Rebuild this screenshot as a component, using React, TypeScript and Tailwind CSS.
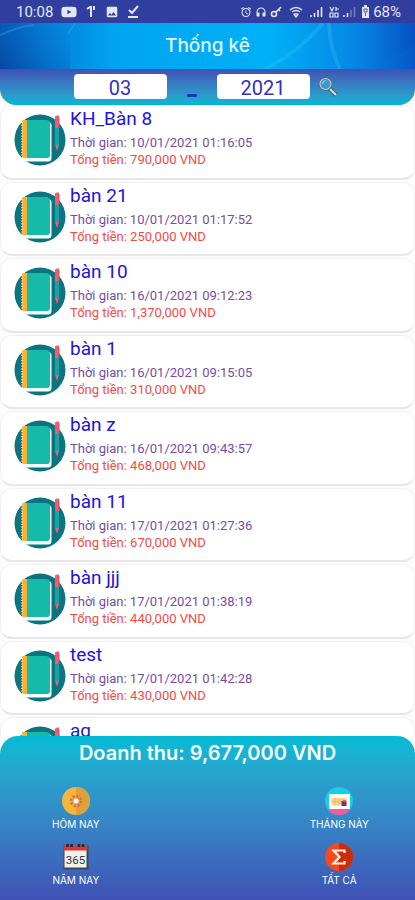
import type { ReactNode } from "react";
import { FaYoutube } from "react-icons/fa";
import { MdAlarm, MdHeadphones, MdImage } from "react-icons/md";

type Bill = { name: string; time: string; total: string };

const bills: Bill[] = [
  { name: "KH_Bàn 8", time: "10/01/2021 01:16:05", total: "790,000" },
  { name: "bàn 21", time: "10/01/2021 01:17:52", total: "250,000" },
  { name: "bàn 10", time: "16/01/2021 09:12:23", total: "1,370,000" },
  { name: "bàn 1", time: "16/01/2021 09:15:05", total: "310,000" },
  { name: "bàn z", time: "16/01/2021 09:43:57", total: "468,000" },
  { name: "bàn 11", time: "17/01/2021 01:27:36", total: "670,000" },
  { name: "bàn jjj", time: "17/01/2021 01:38:19", total: "440,000" },
  { name: "test", time: "17/01/2021 01:42:28", total: "430,000" },
  { name: "aq", time: "", total: "" },
];

function NotebookIcon() {
  return (
    <svg viewBox="0 0 52 52" className="size-[52px] shrink-0" aria-hidden="true">
      <circle cx="26" cy="26" r="25.5" fill="#0b7480" />
      <path d="M9 8h25q3.500 0 3.500 3.500V44q0 3.500-3.500 3.500H12q-4 0-4-3.500z" fill="#f4fffd" />
      <path d="M11 6h21q4 0 4 4v31q0 3-3 3H11z" fill="#16baa9" />
      <path d="M8 7q0-1 2-1h3v38H8z" fill="#fbb034" />
      <path d="M8 8v36" stroke="#ffe9b8" strokeWidth="1.500" strokeDasharray="1.200 1.500" />
      <path d="M41 14h4v17h-4z" fill="#16a5a3" />
      <path d="M41 3q0-1.500 2-1.500h2V14H41z" fill="#f25f6b" />
      <path d="M44 3h1.500v11H44z" fill="#d9536a" />
      <path d="M41 31h4l-2 6z" fill="#ec626c" />
    </svg>
  );
}

function SearchIcon() {
  return (
    <svg viewBox="0 0 20 20" className="size-5" aria-hidden="true">
      <path d="m11.500 11.500 6.500 6.500" stroke="#31566a" strokeWidth="4" />
      <path d="m12 12 6 6" stroke="#d4d9dd" strokeWidth="2.400" />
      <circle cx="7.500" cy="7" r="5.800" fill="#3c99cc" stroke="#426779" strokeWidth="2" />
      <circle cx="7.500" cy="7" r="5.500" fill="none" stroke="#c9d3d7" strokeWidth="1.200" />
      <path d="M4.500 7q0-3 3-3.500" fill="none" stroke="#a8d8ef" />
    </svg>
  );
}

function TodayIcon() {
  return (
    <svg viewBox="0 0 28 28" className="size-7" aria-hidden="true">
      <circle cx="14" cy="14" r="14" fill="#f4b63f" />
      <path d="M14 0a14 14 0 0 1 0 28z" fill="#dda23c" />
      <circle cx="14" cy="14" r="5" fill="none" stroke="#e76a37" strokeWidth="2.500" strokeDasharray="2.200 1.700" />
      <circle cx="14" cy="14" r="3.500" fill="#e98c52" />
      <circle cx="14" cy="14" r="2.500" fill="#fff" />
    </svg>
  );
}

function MonthIcon() {
  return (
    <svg viewBox="0 0 28 28" className="size-7" aria-hidden="true">
      <circle cx="14" cy="14" r="14" fill="#16cee5" />
      <path d="M2.500 22h23a14 14 0 0 1-23 0z" fill="#f35b9c" />
      <path d="M4 7h21v15H4z" fill="#fff" />
      <path d="M6.500 11h15v7.500h-15z" fill="#fbd58a" />
      <path d="M6.500 14.500h10M10 11v7M14 11v7M18 11v3" stroke="#f0b875" />
      <path d="M16.500 14h5v5h-5z" fill="#74317e" />
      <path d="M18 13h3v2h-3z" fill="#f0536d" />
    </svg>
  );
}

function YearIcon() {
  return (
    <svg viewBox="0 0 28 28" className="size-7" aria-hidden="true">
      <path d="M1.500 2h25v24.500h-25z" fill="#3d4654" />
      <path d="M2.500 7h22v17.500h-22z" fill="#f1f1ed" />
      <path d="M1.500 2h24v5.500h-24z" fill="#db3630" />
      <path d="M5.500 1v3M9.500 1v3M17 1v3M21 1v3" stroke="#26262b" strokeWidth="2.500" />
      <text x="13.500" y="20.500" textAnchor="middle" fontSize="11.500" fontWeight="400" fontFamily="Roboto, sans-serif" fill="#33373c">
        365
      </text>
    </svg>
  );
}

function SumIcon() {
  return (
    <svg viewBox="0 0 28 28" className="size-7" aria-hidden="true">
      <circle cx="14" cy="14" r="14" fill="#f44a1d" />
      <path d="M14 0a14 14 0 0 1 0 28z" fill="#cb2d0b" />
      <path d="M19.500 10V7.500H8.500l6 6.500-6 6.500h11V18" fill="none" stroke="#fff0e8" strokeWidth="2.200" />
    </svg>
  );
}

function StatusBar() {
  return (
    <div className="flex h-[23px] items-center bg-[#303f9f] pr-3.5 pl-4 text-[#e4e6f6]">
      <span className="w-[45px] text-[15px]/6">10:08</span>
      <div className="flex items-center gap-2">
        <FaYoutube className="size-4" />
        <svg viewBox="0 0 12 14" className="h-3.5 w-3" aria-hidden="true">
          <path d="M2 4l3-2h2M6 2v10M9 1v4" fill="none" stroke="currentColor" strokeWidth="2" />
        </svg>
        <MdImage className="size-3.5" />
        <svg viewBox="0 0 12 14" className="h-3.5 w-3" aria-hidden="true">
          <path d="m2 5 3 3 6-7M1 12h10" fill="none" stroke="currentColor" strokeWidth="2" />
        </svg>
      </div>
      <div className="ml-auto flex items-center gap-[3px]">
        <MdAlarm className="size-3" />
        <MdHeadphones className="size-3" />
        <svg viewBox="0 0 12 12" className="size-3" aria-hidden="true">
          <circle cx="4" cy="8" r="2.500" fill="none" stroke="currentColor" strokeWidth="1.600" />
          <path d="m6 6 5-5M8 3l2 2" stroke="currentColor" strokeWidth="1.600" />
        </svg>
        <svg viewBox="0 0 14 12" className="ml-1 h-3 w-3.5" aria-hidden="true">
          <path d="M1 4q6-5 12 0M3 6q4-3 8 0M5 8.500q2-1.500 4 0L7 11z" fill="none" stroke="currentColor" strokeWidth="1.400" />
        </svg>
        <svg viewBox="0 0 13 12" className="ml-1 h-3 w-[13px]" aria-hidden="true">
          <path d="M1 9v2M4.500 7v4M8 4v7M11.500 1v10" stroke="currentColor" strokeWidth="1.600" />
        </svg>
        <svg viewBox="0 0 12 12" className="ml-0.5 size-3" aria-hidden="true">
          <path d="M2 1l2 4 2-4M8 1v4M8 3h3M2 7h3v4H2zM7 7h3v4H7z" fill="none" stroke="currentColor" strokeWidth="1.200" />
        </svg>
        <svg viewBox="0 0 13 12" className="h-3 w-[13px]" aria-hidden="true">
          <path d="M1 9v2M4.500 7v4" stroke="currentColor" strokeWidth="1.600" />
          <path d="M8 4v7M11.500 1v10" stroke="currentColor" strokeWidth="1.400" opacity=".4" />
        </svg>
        <svg viewBox="0 0 9 13" className="ml-0.5 h-[13px] w-[9px]" aria-hidden="true">
          <path d="M1 2h2V0h3v2h2v11H1z" fill="currentColor" />
          <path d="M3 4h3v3H3zM4.500 8v3" fill="none" stroke="#4b58ab" />
        </svg>
        <span className="text-[15px]/6">68%</span>
      </div>
    </div>
  );
}

function TitleBar() {
  return (
    <header className="relative flex h-[46px] items-center justify-center overflow-hidden bg-[#00aef5]">
      <svg viewBox="0 0 415 46" preserveAspectRatio="none" className="absolute inset-0 size-full" aria-hidden="true">
        <defs>
          <linearGradient id="sky" x1="0" x2="1" y1="0" y2="0">
            <stop offset="0" stopColor="#0558b8" />
            <stop offset=".1" stopColor="#057bd4" />
            <stop offset=".28" stopColor="#00a5f0" />
            <stop offset=".65" stopColor="#00b0f6" />
            <stop offset=".87" stopColor="#0783e3" />
            <stop offset="1" stopColor="#0551c4" />
          </linearGradient>
          <linearGradient id="shade" x1="0" x2="1" y1="1" y2="0">
            <stop offset="0" stopColor="#053f94" stopOpacity=".6" />
            <stop offset="1" stopColor="#0579d4" stopOpacity="0" />
          </linearGradient>
        </defs>
        <path d="M0 0h415v46H0z" fill="url(#sky)" />
        <path d="M0 0h70v46H0z" fill="url(#shade)" />
        <path d="M329 0q1 26 11 46h75V23q-41 21-72 23-13-20-9-46z" fill="#0876dc" opacity=".2" />
        <path d="M264 46q34-16 59-46M329 0q1 26 11 46" fill="none" stroke="#35bff5" strokeWidth="4" opacity=".35" />
        <path d="M68 11l7-11M0 12q17-8 34-10" fill="none" stroke="#35bff5" strokeWidth="2" opacity=".3" />
      </svg>
      <h1 className="relative font-[Inter,sans-serif] text-[19px]/6 font-medium text-[#dff4ff]">Thống kê</h1>
    </header>
  );
}

function FilterBar() {
  const box = "h-[25px] w-[93px] rounded-sm bg-white pt-0.5 text-center text-xl/6 text-[#3930b4] outline-none";
  return (
    <form className="flex h-9 items-start justify-center rounded-b-2xl bg-linear-to-b from-[#3f51b5] to-[#00b6d2] pt-[5px] pr-1">
      <input aria-label="Tháng" defaultValue="03" className={box} />
      <span className="mx-5 mt-5 h-[3px] w-[10px] rounded-full bg-[#2630ba]" aria-hidden="true" />
      <input aria-label="Năm" defaultValue="2021" className={box} />
      <button type="button" aria-label="Tìm kiếm" className="ml-2 pt-[3px]">
        <SearchIcon />
      </button>
    </form>
  );
}

function BillCard({ bill }: { bill: Bill }) {
  return (
    <li className="mb-0.5 flex gap-1 overflow-hidden rounded-xl border border-b-2 border-[#f2f0f2] border-b-[#e8e6e8] bg-white pl-[13px]">
      <div className="pt-2">
        <NotebookIcon />
      </div>
      <div className="pt-px">
        <h2 className="text-[19px]/6 text-[#1d14dd]">{bill.name}</h2>
        {bill.time && (
          <>
            <p className="mt-[3px] text-[13px]/[17px] text-[#774ca5]">Thời gian: {bill.time}</p>
            <p className="text-[13px]/[17px] text-[#f24b45]">Tổng tiền: {bill.total} VND</p>
          </>
        )}
      </div>
    </li>
  );
}

function RangeButton({ label, className, children }: { label: string; className?: string; children: ReactNode }) {
  return (
    <button type="button" className={`flex flex-col items-center gap-[3px] text-[10px]/3 text-white ${className ?? ""}`}>
      {children}
      <span>{label}</span>
    </button>
  );
}

export default function App() {
  return (
    <div className="flex h-screen flex-col overflow-hidden bg-[#fcfcfc] font-[Roboto,sans-serif]">
      <StatusBar />
      <TitleBar />
      <FilterBar />
      <main className="min-h-0 flex-1 overflow-hidden">
        <ul className="grid h-[689px] grid-rows-9">
          {bills.map((bill) => (
            <BillCard key={bill.name} bill={bill} />
          ))}
        </ul>
      </main>
      <footer className="rounded-t-[18px] bg-linear-to-b from-[#00bcd4] to-[#3f51b5] px-2.5 pt-[5px] pb-3.5 font-[Inter,sans-serif]">
        <p className="text-center text-xl/6 font-semibold text-[#f3fcff]">Doanh thu: 9,677,000 VND</p>
        <div className="mt-[22px] grid grid-cols-3 gap-y-[13px]">
          <RangeButton label="HÔM NAY">
            <TodayIcon />
          </RangeButton>
          <RangeButton label="THÁNG NÀY" className="col-start-3">
            <MonthIcon />
          </RangeButton>
          <RangeButton label="NĂM NAY">
            <YearIcon />
          </RangeButton>
          <RangeButton label="TẤT CẢ" className="col-start-3">
            <SumIcon />
          </RangeButton>
        </div>
      </footer>
    </div>
  );
}
